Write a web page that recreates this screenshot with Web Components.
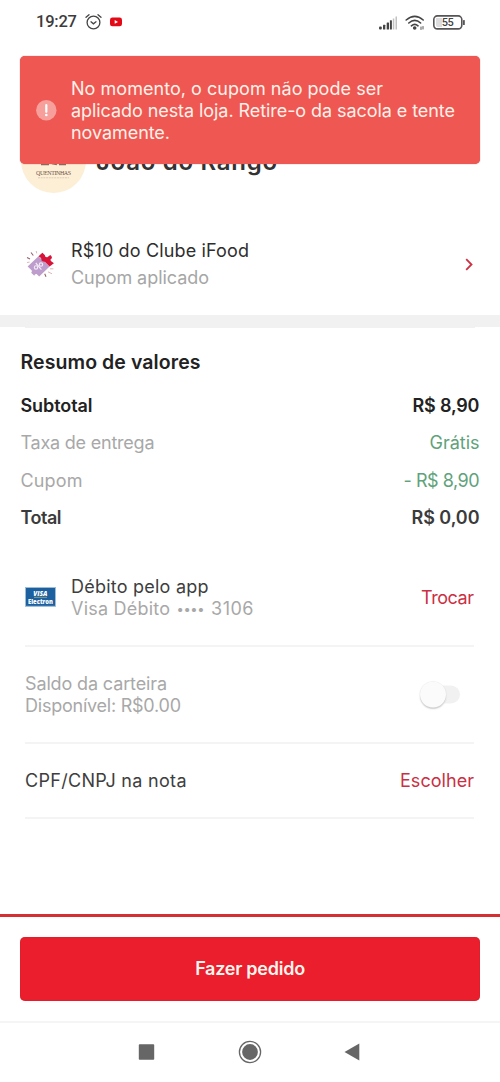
<!DOCTYPE html>
<html lang="pt-BR">
<head>
<meta charset="utf-8">
<title>Sacola</title>
<style>
html,body{margin:0;padding:0;background:#fff}
body{width:500px;height:1082px;overflow:hidden;font-family:Inter,"Liberation Sans",sans-serif;font-size:18px;line-height:22px;color:#3e3e3e}
</style>
</head>
<body>
<checkout-screen></checkout-screen>
<script>
const define = (name, html, ready) => customElements.define(name, class extends HTMLElement {
  connectedCallback() {
    if (this.shadowRoot) return;
    const t = document.createElement('template');
    t.innerHTML = html;
    this.attachShadow({ mode: 'open' }).append(t.content.cloneNode(true));
    if (ready) ready(this, this.shadowRoot);
  }
});

// One line of text tracked to fill the width given in "w".
define('tracked-text', `<style>
:host{display:block;white-space:nowrap;flex:none}
span{display:inline-block}
</style><span><slot></slot></span>`, (el, root) => {
  const w = +el.getAttribute('w');
  const span = root.querySelector('span');
  const natural = span.getBoundingClientRect().width;
  const n = el.textContent.length;
  el.style.width = w + 'px';
  span.style.letterSpacing = ((w - natural) / (n - 1)).toFixed(3) + 'px';
});

define('status-bar', `<style>
:host{display:flex;height:45px;padding:0 35px 0 36px;align-items:center;box-sizing:border-box;justify-content:space-between;font:500 16.5px/20px Roboto,sans-serif;color:#3c3c3c}
div{display:flex;align-items:center}
svg{display:block}
.l svg:first-of-type{margin-left:7.5px}.l svg:last-of-type{margin-left:8.5px}
.l{padding-bottom:1px}
.r{gap:8px}
</style>
<div class="l"><tracked-text w="41">19:27</tracked-text>
<svg width="17" height="18" viewBox="0 0 17 18" fill="none" stroke="#444" stroke-width="1.3" stroke-linecap="round"><circle cx="8.5" cy="9.5" r="6.4"/><path d="M1 4.3 4 1.7M16 4.3 13 1.7M6 8.8l2.4 2 2.6-2"/></svg>
<svg width="12" height="10" viewBox="0 0 12 10"><rect y=".5" width="12" height="8.8" rx="2.4" fill="#e20a17"/><path d="M4.7 3v3.8L8 4.9z" fill="#fff"/></svg></div>
<div class="r">
<svg width="18" height="14" viewBox="0 0 18 14"><g fill="#444"><rect y="10.5" width="2.8" height="3" rx="1"/><rect x="4" y="8.8" width="2.3" height="4.7" rx=".5"/><rect x="7.7" y="6.5" width="2.3" height="7" rx=".5"/><rect x="10.9" y="4.3" width="2" height="9.2" rx=".5"/></g><g fill="#c2c2c2"><rect x="13.8" y="2.5" width="1.5" height="11"/><rect x="16.5" y=".5" width="1.5" height="13"/></g></svg>
<svg width="20" height="16" viewBox="0 0 20 16" fill="none" stroke="#444" stroke-width="1.6" stroke-linecap="round"><path d="M1.2 5Q9.8-2.2 18.2 5M3.8 8Q9.8 2.9 15.6 8M6.4 10.8Q9.8 8 13 10.8"/><circle cx="9.7" cy="13" r="1" fill="#444"/><path d="M16 12v2.5M18 11.5v2.5" stroke-width=".9"/></svg>
<svg width="32" height="15" viewBox="0 0 32 15"><rect x=".8" y=".9" width="28" height="13" rx="3.6" fill="none" stroke="#555" stroke-width="1.6"/><path d="M3 3h6v9H5Q3 12 3 10z" fill="#ddd"/><rect x="30" y="5" width="1.8" height="5" rx=".6" fill="#555"/><text x="14.8" y="11.4" text-anchor="middle" font-family="Roboto,sans-serif" font-size="11" textLength="12" fill="#444">55</text></svg></div>`);

define('toast-message', `<style>
:host{position:absolute;left:20px;top:56px;width:460px;height:107.7px;box-sizing:border-box;padding:22px 24px 0 15.5px;border-radius:5px;background:#ef5753;box-shadow:0 0 1px #b9403e;color:#fff1e9;display:flex}
svg{flex:none;margin:22px 14.5px 0 0}
</style>
<svg width="21" height="21" viewBox="0 0 21 21"><circle cx="10.3" cy="10.2" r="10.2" fill="#f7a09b"/><path d="M10.3 5v6.8" stroke="#fff" stroke-width="2.2" stroke-linecap="round"/><circle cx="10.3" cy="15" r="1.3" fill="#fff"/></svg>
<div><slot></slot></div>`);

define('store-header', `<style>
:host{display:flex;height:148px;align-items:flex-start;padding:83px 0 0 21px;box-sizing:border-box;gap:10px}
svg{display:block}
.n{font-size:24px;font-weight:600;line-height:30px;margin-top:18.5px;color:#333}
</style>
<svg width="65" height="65" viewBox="0 0 65 65"><circle cx="32.5" cy="32.5" r="32.5" fill="#fdeed6"/><path d="M20 36h8M31 35l5 1M38 36h7" stroke="#8b6c5d" stroke-width="2.6"/><text x="32.6" y="46.6" text-anchor="middle" font-family="Liberation Serif,serif" font-size="6" textLength="35" fill="#705548">QUENTINHAS</text><path d="M17 49.8h31" stroke="#dfcbb7" stroke-width="1" stroke-dasharray="2 .7"/></svg>
<tracked-text class="n" w="181">João do Rango</tracked-text>`);

define('coupon-row', `<style>
:host{display:flex;height:121.5px;box-sizing:border-box;padding:46px 26px 0 26px}
svg{display:block;flex:none}
.i{margin:11px 16px 0 0}
.t{flex:1;display:grid;padding-top:1px;grid-auto-rows:27.3px;color:#2e2e2e}
.t>:last-child{color:#a6a6a6}
.c{margin-top:19px}
</style>
<svg class="i" width="29" height="29" viewBox="0 0 29 29"><path d="M1.6 16.5 12.5 6.2 23.6 16.5 13.2 26.6 10.6 24q-2-.4-2.3 1.8L5.2 22.8q1.6-1.8-.4-3.2z" fill="#bd9dcb"/><path d="M12.5 6.2 16.4 2.8 19 5.3q-.4 2.3 2.3 2l3-2.4q2.2 1.6 1.4 3.6-1.8.6-.8 2.4l3 2.3-4.3 3.3-4.6-4.6-3.2-.8-.8-3z" fill="#d7143a"/><path d="m9.8 13 5.6 6.6" stroke="#f4e9f7" stroke-width="1.2"/><circle cx="10" cy="17.4" r="1.7" fill="none" stroke="#f4e9f7" stroke-width="1.1"/><circle cx="15" cy="14.6" r="1.7" fill="none" stroke="#f4e9f7" stroke-width="1.1"/><path d="m5 2.5 2.3 3M1 7.5l3 1.4M18.7 23.8l1.3 3" stroke="#96626d" stroke-width="1.1"/><path d="m10.2 1 .6 2.4M1 12.5l2.6-.4M24 18.8h3.4M22 21.8l4 2" stroke="#dfb6ba"/></svg>
<div class="t"><tracked-text w="178">R$10 do Clube iFood</tracked-text><tracked-text w="138">Cupom aplicado</tracked-text></div>
<svg class="c" width="9" height="13" viewBox="0 0 9 13"><path d="m1.2 1.2 5.3 5.3-5.3 5.3" fill="none" stroke="#cf2f43" stroke-width="1.8"/></svg>`);

define('section-band', `<style>
:host{display:block;height:13.5px;background:#f1f1f1}
div{padding-top:12px;display:flex;justify-content:space-between}
i{height:1.5px;width:25px;background:#fff}
</style><div><i></i><i></i></div>`);

define('price-row', `<style>
:host{display:flex;justify-content:space-between;height:37.4px;color:#a8a8a8}
:host([strong]){font-weight:600;color:#222}
:host([total]){color:#3b3b3b}
.v{color:#60a27b}
:host([strong]) .v{color:inherit}
</style><slot></slot><div class="v"><slot name="value"></slot></div>`);

define('price-summary', `<style>
:host{display:block;height:230px;padding:22px 20.5px 0 20.5px;box-sizing:border-box}
.h{font-size:19.5px;font-weight:600;line-height:24px;color:#222;margin-bottom:20.8px}
</style>
<tracked-text class="h" w="180">Resumo de valores</tracked-text>
<price-row strong><tracked-text w="72">Subtotal</tracked-text><tracked-text slot="value" w="67">R$ 8,90</tracked-text></price-row>
<price-row><tracked-text w="134">Taxa de entrega</tracked-text><tracked-text slot="value" w="50">Grátis</tracked-text></price-row>
<price-row><tracked-text w="62">Cupom</tracked-text><tracked-text slot="value" w="76">- R$ 8,90</tracked-text></price-row>
<price-row strong total><tracked-text w="41">Total</tracked-text><tracked-text slot="value" w="68">R$ 0,00</tracked-text></price-row>`);

define('option-row', `<style>
:host{display:flex;align-items:center;margin:0 26px 0 25px;border-bottom:2px solid #f4f4f4;box-sizing:border-box}
.b{flex:1}
.a{color:#cb2f43}
::slotted(svg){display:block;margin-right:15px}
</style><slot name="icon"></slot><div class="b"><slot></slot></div><div class="a"><slot name="action"></slot></div>`);

define('toggle-switch', `<style>
:host{display:block;width:41px;height:27px;margin-right:13.5px}
div{width:34px;height:18px;border-radius:9px;background:#f1f1f1;display:flex;align-items:center;transform:translate(6px,3.5px)}
i{flex:none;width:26px;height:26px;margin-left:-6px;border-radius:50%;background:#fbfbfb;box-shadow:0 1.5px 1.5px #ccc,0 0 1px #ddd}
</style><div><i></i></div>`);

define('order-footer', `<style>
:host{display:block;height:109px;box-sizing:border-box;border-top:3px solid #d52e33;border-bottom:2px solid #f5f5f5;padding:20.4px 20px 0}
button{display:flex;width:460px;height:64px;padding:0;border:0;border-radius:5px;background:#ea1e2c;color:#fff5ee;align-items:center;justify-content:center;font:600 18px/22px Inter,sans-serif;box-shadow:inset 0 0 1px #b31622}
</style><button><tracked-text w="110">Fazer pedido</tracked-text></button>`);

define('system-nav', `<style>
:host{display:flex;height:59px;box-sizing:border-box;padding-bottom:1px;align-items:center;justify-content:center;gap:79px}
svg{display:block}
</style>
<svg width="24" height="24" viewBox="0 0 24 24" fill="#666"><rect x="3.8" y="4.3" width="15.4" height="15.4" rx=".8"/></svg>
<svg width="24" height="24" viewBox="0 0 24 24"><circle cx="12" cy="12" r="10.6" fill="none" stroke="#666" stroke-width="1.3"/><circle cx="12" cy="12" r="7.9" fill="#666"/></svg>
<svg width="24" height="24" viewBox="0 0 24 24" fill="#666"><path d="M3.5 12 18.3 3.6v16.8z"/></svg>`);

define('checkout-screen', `<style>
:host{display:flex;flex-direction:column;width:500px;height:1082px;position:relative;background:#fff}
:host>*{flex:none}
.m{color:#a8a8a8}
.d{color:#3e3e3e}
.card{display:flex;gap:6.5px}
.dots{font-size:13px;padding-top:.5px}
.pay{height:89px;padding-bottom:7px}
.pay svg{margin-top:-2px}
.wal{height:96.5px;padding-top:2px}
.cpf{height:75px;padding-top:2px}
.sp{flex:1}
</style>
<status-bar></status-bar>
<store-header></store-header>
<coupon-row></coupon-row>
<section-band></section-band>
<price-summary></price-summary>
<option-row class="pay">
<svg slot="icon" width="31" height="20" viewBox="0 0 31 20"><rect x=".5" y=".5" width="30" height="18.8" fill="#1c60a0" stroke="#9bbdd6"/><text x="15.3" y="8.6" text-anchor="middle" font-family="Open Sans,sans-serif" font-size="6.5" font-style="italic" font-weight="800" textLength="14" fill="#fff">VISA</text><path d="M9 10.3h13" stroke="#9ca77a" stroke-width=".9"/><text x="15.5" y="17.2" text-anchor="middle" font-family="Open Sans,sans-serif" font-size="6.3" font-weight="800" textLength="25" lengthAdjust="spacingAndGlyphs" fill="#fff">Electron</text></svg>
<tracked-text class="d" w="137.5">Débito pelo app</tracked-text><div class="card m"><tracked-text w="99">Visa Débito</tracked-text><tracked-text class="dots" w="28">••••</tracked-text><tracked-text w="42.5">3106</tracked-text></div>
<tracked-text slot="action" w="53">Trocar</tracked-text>
</option-row>
<option-row class="wal">
<tracked-text class="m" w="142">Saldo da carteira</tracked-text><tracked-text class="m" w="156">Disponível: R$0.00</tracked-text>
<toggle-switch slot="action"></toggle-switch>
</option-row>
<option-row class="cpf">
<tracked-text class="d" w="161.5">CPF/CNPJ na nota</tracked-text>
<tracked-text slot="action" w="74">Escolher</tracked-text>
</option-row>
<div class="sp"></div>
<order-footer></order-footer>
<system-nav></system-nav>
<toast-message><tracked-text w="312">No momento, o cupom não pode ser</tracked-text><tracked-text w="384">aplicado nesta loja. Retire-o da sacola e tente</tracked-text><tracked-text w="99">novamente.</tracked-text></toast-message>`);
</script>
</body>
</html>
